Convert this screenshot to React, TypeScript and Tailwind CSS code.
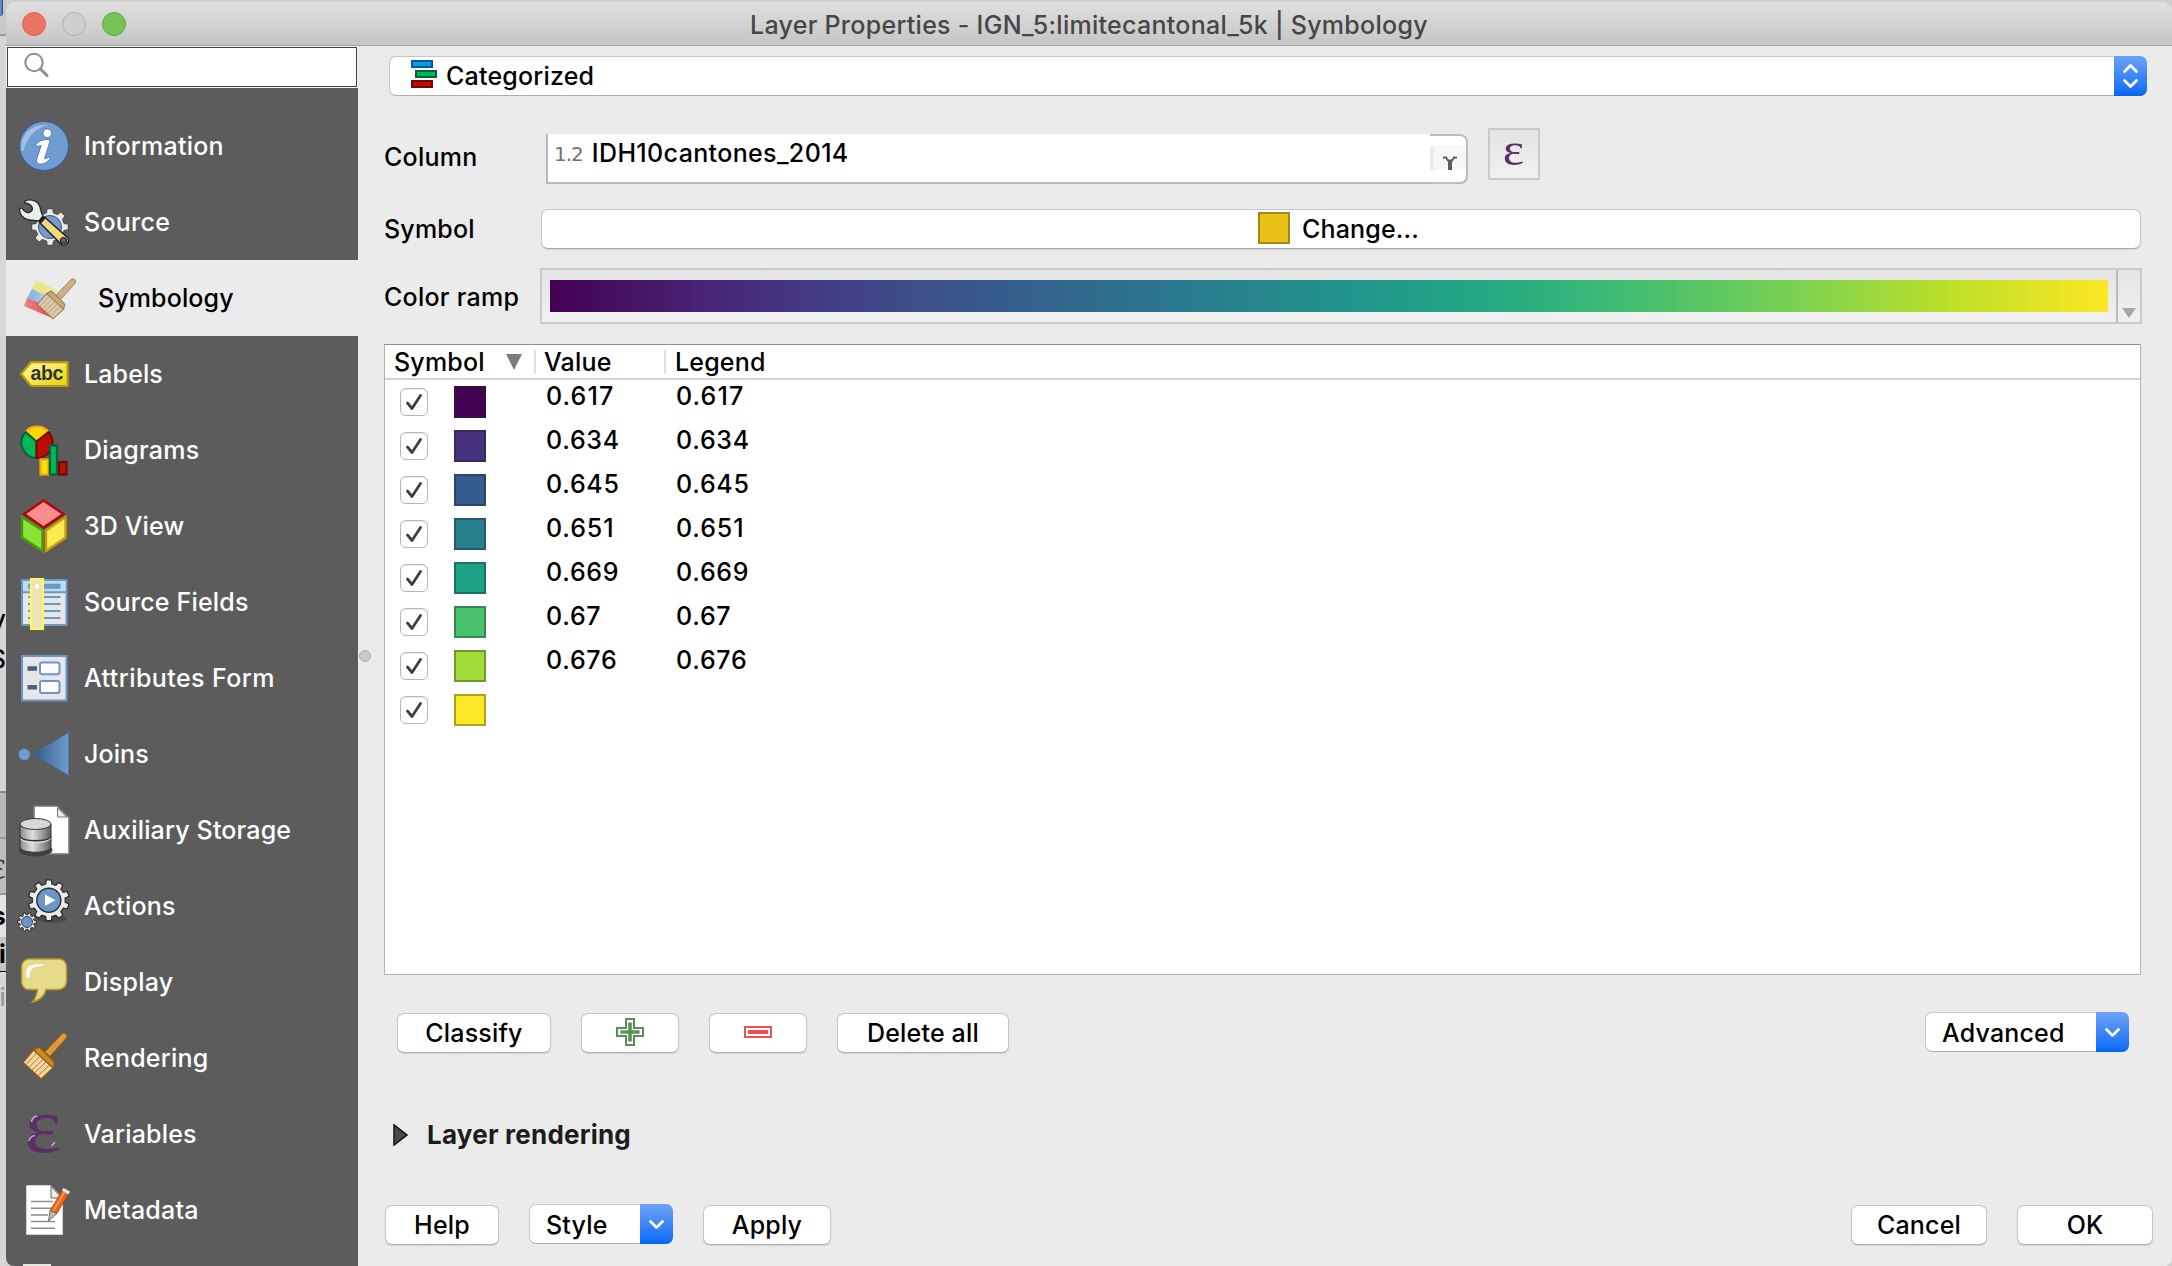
import type { ReactNode } from "react";

function gearPath(cx: number, cy: number, inner: number, outer: number, teeth: number, turn = 0) {
  const step = (Math.PI * 2) / teeth;
  const points: string[] = [];
  for (let i = 0; i < teeth; i++) {
    const a = i * step + turn;
    const corners: [number, number][] = [
      [inner, a - step * 0.3],
      [outer, a - step * 0.2],
      [outer, a + step * 0.2],
      [inner, a + step * 0.3],
    ];
    corners.forEach(([r, t]) => points.push(`${(cx + r * Math.cos(t)).toFixed(2)},${(cy + r * Math.sin(t)).toFixed(2)}`));
  }
  return `M${points.join("L")}Z`;
}

function Icon({ children }: { children: ReactNode }) {
  return (
    <svg viewBox="0 0 60 60" className="h-[60px] w-[60px] shrink-0 overflow-visible">
      {children}
    </svg>
  );
}

function InfoIcon() {
  return (
    <Icon>
      <circle cx="30" cy="30" r="24.5" fill="#6f9dd1" stroke="#415a94" strokeWidth="1.2" />
      <path d="M7.5 35C6 20 15 8 35 8.5C22 12 13 20 9.5 35Z" fill="#a3c0e2" />
      <circle cx="33.3" cy="17.2" r="4.3" fill="#fff" stroke="#4c6ba5" strokeWidth=".8" />
      <path d="M22 28.5C25 25 30 23 34.8 23.5L36 25L30.5 42.5C32.5 43 34 41 35.5 41L36 42.5C34 46 29 48.5 25.5 48C22 47.5 22.5 44 23.3 41L27.2 29.5C25.5 29 24 31 22.5 30.5Z" fill="#fff" stroke="#4c6ba5" strokeWidth=".8" />
    </Icon>
  );
}

function SourceIcon() {
  return (
    <Icon>
      <path d={gearPath(36, 35, 14.5, 18.5, 8, Math.PI / 8 + 0.39)} fill="#e9e9ea" stroke="#333" strokeWidth=".8" />
      <circle cx="36" cy="35" r="11.5" fill="#6f9dd1" stroke="#44546a" strokeWidth="1" />
      <path d="M11 9C17 6 24 9 26 15C27 19 27 21 29 24L25 29C21 28 19 29 15 28C9 27 5 22 5.5 17L8 16C10 20 14 22 17 19.5C20 17 18 12 11 11Z" fill="#eceded" stroke="#2b2b2b" strokeWidth="1.3" />
      <path d="M30.5 25L54 46C56 50 52 54.5 48 53L25.5 30.5Z" fill="#f4d97c" stroke="#222" strokeWidth="1.5" />
      <path d="M30.5 25L25.5 30.5" stroke="#222" strokeWidth="3.5" />
      <circle cx="49.5" cy="48.5" r="3" fill="#666" stroke="#222" strokeWidth="1.2" />
    </Icon>
  );
}

function Brush({ handle, head, bristle, line }: { handle: string; head: string; bristle: string; line: string }) {
  return (
    <g strokeLinejoin="round">
      <path d="M30 24.5L47 6.5C50 4 54.500 7.5 51.5 11L35 29.5Z" fill={handle} stroke={line} strokeWidth="1.1" />
      <path d="M19 22.5L24.5 19.5L30 24.5L35 29.5L40 35L38.5 41L30 34Z" fill={head} stroke={line} strokeWidth="1.2" />
      <path d="M19 22.5L38.5 40.5L26.5 51.5L8.5 35Z" fill={bristle} stroke={line} strokeWidth="1.2" />
      <path d="M11 37.5L22 26M14 40.5L25 29M17 43L28.5 32M20 45.5L31.5 34.5M23 48.5L35 37.5" stroke={line} strokeWidth=".9" strokeOpacity=".8" fill="none" />
    </g>
  );
}

function SymbologyIcon() {
  return (
    <Icon>
      <defs>
        <linearGradient id="fadeY"><stop offset=".3" stopColor="#e9e684" /><stop offset="1" stopColor="#eeeebc" /></linearGradient>
        <linearGradient id="fadeB"><stop offset=".2" stopColor="#90b4e0" /><stop offset="1" stopColor="#d6e2f0" /></linearGradient>
        <linearGradient id="fadeR"><stop offset="0" stopColor="#e9898c" /><stop offset=".6" stopColor="#e2575d" /></linearGradient>
      </defs>
      <path d="M22 12L48 24L42 32L18 21Z" fill="url(#fadeY)" />
      <path d="M18 21L42 32L38 42L13 30Z" fill="url(#fadeB)" />
      <path d="M13 30L42 42L38 50L10 38Z" fill="url(#fadeR)" />
      <g transform="translate(16 6) scale(.87)">
        <Brush handle="#cdb184" head="#c9a972" bristle="#dccbaa" line="#97805a" />
      </g>
    </Icon>
  );
}

function LabelsIcon() {
  return (
    <Icon>
      <defs>
        <linearGradient id="tag" x1="0" y1="0" x2="1" y2="1"><stop offset=".3" stopColor="#fdf07a" /><stop offset="1" stopColor="#e8cf00" /></linearGradient>
      </defs>
      <path d="M7 30L17 18.2H53.7V42H17Z" fill="url(#tag)" stroke="#b8960d" strokeWidth="2.2" />
      <text x="16.5" y="35.8" fontSize="19.5" fontWeight="700" textLength="33" fill="#2e3436" fontFamily="Liberation Sans, sans-serif">abc</text>
    </Icon>
  );
}

function DiagramsIcon() {
  return (
    <Icon>
      <path d="M22.5 21.5L11.5 11.5A15.5 15.5 0 0 1 34.5 11.5Z" fill="#ffd800" stroke="#f6a61c" strokeWidth="2" />
      <path d="M22.5 21.5L11.5 12A15.5 15.5 0 0 0 22.5 38Z" fill="#00b955" stroke="#0b5f3d" strokeWidth="2" />
      <path d="M22.5 21.5L34.5 12A15.5 15.5 0 0 1 22.5 38Z" fill="#bd0b00" stroke="#6e0a05" strokeWidth="2" />
      <rect x="26.5" y="39.5" width="8" height="15" fill="#ffe000" stroke="#f6a61c" strokeWidth="2.2" />
      <rect x="45" y="42" width="7.5" height="12.5" fill="#c20e00" stroke="#6e0a05" strokeWidth="2.2" />
      <rect x="35.8" y="25.5" width="7.2" height="29" fill="#00b955" stroke="#0b5f3d" strokeWidth="2.2" />
    </Icon>
  );
}

function CubeIcon() {
  return (
    <Icon>
      <path d="M29.5 4.5L49.5 18L29.5 31.5L10 18Z" fill="#f78d8d" stroke="#b00606" strokeWidth="2.4" />
      <path d="M8 21L28.5 34.5V55L8 41.5Z" fill="#8ae234" stroke="#4e9a06" strokeWidth="2.4" />
      <path d="M51.5 21L32 34.5V55L51.5 41.5Z" fill="#fce94f" stroke="#c4a000" strokeWidth="2.4" />
    </Icon>
  );
}

function FieldsIcon() {
  return (
    <Icon>
      <rect x="8" y="8" width="44.5" height="45" fill="#e6e6e6" stroke="#6d97c4" strokeWidth="2" />
      <rect x="9" y="9" width="42.5" height="10.5" fill="#bcdcf0" />
      <path d="M8 20.3H52.5" stroke="#6d97c4" strokeWidth="2" />
      <path d="M14 14.3H46.5" stroke="#6d97c4" strokeWidth="5" />
      <path d="M14 25H46.5M14 32H46.5M14 39H46.5M14 46H46.5" stroke="#6d97c4" strokeWidth="2" />
      <rect x="17.2" y="7.2" width="11.6" height="49.6" fill="#ece2ba" stroke="#fcf75e" strokeWidth="2.5" />
      <rect x="21" y="12" width="4" height="4.5" fill="#fff" />
    </Icon>
  );
}

function FormIcon() {
  return (
    <Icon>
      <rect x="8" y="8" width="44.5" height="44.5" fill="#e6e6e6" stroke="#6d97c4" strokeWidth="2" />
      <path d="M13.5 20.5H23M13.5 39.3H23" stroke="#46617d" strokeWidth="4.6" />
      <rect x="26" y="14.5" width="19.5" height="11.8" rx="2" fill="#fbfdff" stroke="#6d97c4" strokeWidth="2" />
      <rect x="26" y="33" width="19.5" height="12" rx="2" fill="#fbfdff" stroke="#6d97c4" strokeWidth="2" />
    </Icon>
  );
}

function JoinsIcon() {
  return (
    <Icon>
      <defs>
        <linearGradient id="join"><stop offset="0" stopColor="#2f5b8a" /><stop offset="1" stopColor="#6f9dcd" /></linearGradient>
      </defs>
      <circle cx="10.3" cy="30.5" r="5.8" fill="#6f9dcd" stroke="#4b79a9" strokeWidth=".8" />
      <path d="M19 30L54.7 8.5V51.5Z" fill="url(#join)" stroke="#44719f" strokeWidth=".8" />
    </Icon>
  );
}

function StorageIcon() {
  return (
    <Icon>
      <defs>
        <linearGradient id="disk"><stop offset="0" stopColor="#8b8b8b" /><stop offset=".4" stopColor="#e0e0e0" /><stop offset="1" stopColor="#5e5e5e" /></linearGradient>
      </defs>
      <path d="M20 6H43L55 17.5V54H20Z" fill="#fff" stroke="#777" strokeWidth="1.5" />
      <path d="M43.5 8V17H53Z" fill="#ececec" stroke="#777" strokeWidth="1" />
      <ellipse cx="21.5" cy="50" rx="17" ry="6.5" fill="#3c4344" />
      <path d="M6 24V47C6 54 37 54 37 47V24Z" fill="url(#disk)" stroke="#333" strokeWidth="1" />
      <path d="M6 36.5C9 42 34 42 37 36.5" fill="none" stroke="#333" strokeWidth="1.5" />
      <path d="M6.5 38.5C9 44 34 44 36.5 38.5" fill="none" stroke="#eee" strokeWidth="1" />
      <ellipse cx="21.500" cy="24" rx="15.5" ry="5.5" fill="#d8d8d8" stroke="#333" strokeWidth="1" />
    </Icon>
  );
}

function ActionsIcon() {
  return (
    <Icon>
      <ellipse cx="38" cy="43" rx="15" ry="4" fill="#4a4a4a" />
      <path d={gearPath(34.8, 24.2, 16.5, 20.5, 10, Math.PI / 10)} fill="#ebebeb" stroke="#2a2a2a" strokeWidth="1.2" />
      <circle cx="34.8" cy="24.2" r="12" fill="#6a96c8" stroke="#22303f" strokeWidth="1.4" />
      <path d="M31 18.5L41.5 24.2L31 30Z" fill="#fff" />
      <path d={gearPath(13, 46, 7.3, 9.5, 10)} fill="#ebebeb" stroke="#2a2a2a" strokeWidth="1" />
      <circle cx="13" cy="46" r="5.5" fill="#6a96c8" stroke="#33475e" strokeWidth="1" />
    </Icon>
  );
}

function DisplayIcon() {
  return (
    <Icon>
      <path d="M15 7H45A7.5 7.5 0 0 1 52.5 14.5V29A8 8 0 0 1 45 37.5H32C31 43 26 48 18.5 50C22 46 23 42 23.5 37.5H15A7.5 7.5 0 0 1 7.7 29V14.5A7.5 7.5 0 0 1 15 7Z" fill="#e5db8b" stroke="#b79a25" strokeWidth="1.5" />
      <path d="M13 26C11 15 14 11.5 30 12.5C30 14 28 14 24 14.5C17 15 16 18 15.5 26Z" fill="#fff" />
    </Icon>
  );
}

function RenderingIcon() {
  return (
    <Icon>
      <g transform="translate(.5 -.5)">
        <Brush handle="#dc9a3e" head="#d08a24" bristle="#f4d5a0" line="#8e5a12" />
      </g>
    </Icon>
  );
}

function VariablesIcon() {
  return (
    <Icon>
      <text x="0" y="48" transform="translate(29 0) scale(1.12 1)" textAnchor="middle" fontSize="79" fill="#5b2f66" fontFamily="Liberation Serif, serif">ε</text>
      <path d="M17.5 18C18 14.5 20 12.5 23.5 12M15 37C15.500 34 18 32 21 31.5M37.5 42L41 38" stroke="#c3a9c9" strokeWidth="1.6" fill="none" />
    </Icon>
  );
}

function MetadataIcon() {
  return (
    <Icon>
      <path d="M12.5 5.5H36.5L48.5 18V54.5H12.5Z" fill="#fff" stroke="#ddd" strokeWidth=".8" />
      <path d="M37 6.5V18H48Z" fill="#eee" stroke="#666" strokeWidth="1" />
      <path d="M17 21.5H39M17 28.2H38M17 35H34M17 41.5H41M17 48.3H41" stroke="#8c8f8d" strokeWidth="1.5" />
      <path d="M36 30.5L48.5 10L54.5 13.5L43 33.5Z" fill="#e8641e" stroke="#b4481c" strokeWidth=".8" />
      <path d="M39 31.5L50.5 12" stroke="#f59a3c" strokeWidth="1.8" />
      <path d="M48 10.5L49.5 8L56 11.5L54.5 14.5Z" fill="#e9e9e9" />
      <path d="M36 30.5L43 33.5L34.5 41Z" fill="#b9b9b9" stroke="#555" strokeWidth=".8" />
    </Icon>
  );
}

const sections: { label: string; tracking: string; icon: ReactNode }[] = [
  { label: "Information", tracking: "tracking-[0.25px]", icon: <InfoIcon /> },
  { label: "Source", tracking: "tracking-[0.25px]", icon: <SourceIcon /> },
  { label: "Symbology", tracking: "tracking-[0.12px]", icon: <SymbologyIcon /> },
  { label: "Labels", tracking: "tracking-[0.12px]", icon: <LabelsIcon /> },
  { label: "Diagrams", tracking: "tracking-[0.25px]", icon: <DiagramsIcon /> },
  { label: "3D View", tracking: "tracking-[0.12px]", icon: <CubeIcon /> },
  { label: "Source Fields", tracking: "tracking-[0.18px]", icon: <FieldsIcon /> },
  { label: "Attributes Form", tracking: "tracking-[0.43px]", icon: <FormIcon /> },
  { label: "Joins", tracking: "tracking-[0.08px]", icon: <JoinsIcon /> },
  { label: "Auxiliary Storage", tracking: "tracking-[0.17px]", icon: <StorageIcon /> },
  { label: "Actions", tracking: "tracking-[0.2px]", icon: <ActionsIcon /> },
  { label: "Display", tracking: "tracking-[0.25px]", icon: <DisplayIcon /> },
  { label: "Rendering", tracking: "tracking-[0.2px]", icon: <RenderingIcon /> },
  { label: "Variables", tracking: "tracking-[0.2px]", icon: <VariablesIcon /> },
  { label: "Metadata", tracking: "tracking-[0.25px]", icon: <MetadataIcon /> },
];

const categories = [
  { value: "0.617", tracking: "tracking-[1.1px]", swatch: "bg-[#440154] border-[#341040]" },
  { value: "0.634", tracking: "tracking-[0.75px]", swatch: "bg-[#46327e] border-[#36295c]" },
  { value: "0.645", tracking: "tracking-[0.75px]", swatch: "bg-[#365c8d] border-[#2b4566]" },
  { value: "0.651", tracking: "tracking-[0.9px]", swatch: "bg-[#277f8e] border-[#235c66]" },
  { value: "0.669", tracking: "tracking-[0.75px]", swatch: "bg-[#1fa187] border-[#1e7261]" },
  { value: "0.67", tracking: "tracking-[0.75px]", swatch: "bg-[#4ac16d] border-[#3a8650]" },
  { value: "0.676", tracking: "tracking-[0.75px]", swatch: "bg-[#a0da39] border-[#72972e]" },
  { value: "", tracking: "", swatch: "bg-[#fde725] border-[#b09f22]" },
];

function Button({ className, children }: { className: string; children: ReactNode }) {
  return (
    <button className={`flex h-10 shrink-0 items-center justify-center rounded-[7px] border border-[#c6c6c6] border-b-[#acacac] bg-white shadow-[0_1px_1px_rgba(0,0,0,0.1)] ${className}`}>
      {children}
    </button>
  );
}

function BlueCap({ double }: { double?: boolean }) {
  return (
    <span className="-my-px -mr-px flex w-[33px] items-center justify-center rounded-r-[7px] bg-linear-to-b from-[#6ea2f5] via-[#3c86f6] to-[#0068f7]">
      <svg viewBox="0 0 33 40" className="h-10 w-[33px]" fill="none" stroke="#fff" strokeWidth="2.8" strokeLinecap="round" strokeLinejoin="round">
        {double ? <path d="M10.5 15.5L16.500 9.5L22.5 15.5M10.5 24.5L16.5 30.5L22.5 24.5" /> : <path d="M10.5 17.5L16.5 23.5L22.5 17.5" />}
      </svg>
    </span>
  );
}

function BackgroundWindow() {
  return (
    <div className="flex w-1.5 shrink-0 flex-col overflow-hidden bg-[#d6d6d6] leading-none text-black">
      <div className="h-9 border-b-2 border-[#999] bg-[#c9c9c9]">
        <div className="h-4 w-[3px] rounded-br-[3px] border-r border-[#2b4f80] bg-[#5b8cc4]" />
      </div>
      <div className="flex h-[600px] items-end justify-end pb-1">y</div>
      <div className="flex h-10 items-end justify-end pb-1">S</div>
      <div className="h-[115px]" />
      <div className="h-[46px] border-t-2 border-[#888] bg-[#b8b8b8]" />
      <div className="flex h-[58px] items-center justify-end border-y-2 border-[#999] bg-[#bdbdbd] font-['Liberation_Serif',serif] text-[40px] text-[#5b2f66]">ε</div>
      <div className="flex h-[42px] items-center justify-end bg-[#e4e4e4] font-bold">s</div>
      <div className="flex h-[35px] items-center justify-end border-b border-black bg-[#c4c4c4] font-bold">i</div>
      <div className="flex h-[50px] items-center justify-end text-[#999]">i</div>
    </div>
  );
}

function Sidebar() {
  return (
    <aside className="flex w-[352px] shrink-0 flex-col overflow-hidden bg-[#5c5c5c]">
      <div className="h-[42px] shrink-0 bg-[#f4f4f4] px-px pt-px">
        <div className="flex h-10 w-[350px] items-center border border-[#3f3f3f] bg-white pl-4">
          <svg viewBox="0 0 26 26" className="-mt-1 h-[26px] w-[26px]" fill="none" stroke="#8c8c8c" strokeLinecap="round">
            <circle cx="10" cy="10.5" r="8.7" strokeWidth="2" />
            <path d="M16.5 17L23 23.5" strokeWidth="3" />
          </svg>
        </div>
      </div>
      <nav className="flex flex-col pt-5 text-white">
        {sections.map((s) =>
          s.label === "Symbology" ? (
            <div key={s.label} className="flex h-[76px] shrink-0 items-center bg-[#ebebeb] pl-2 text-black">
              {s.icon}
              <span className={`ml-6 ${s.tracking}`}>{s.label}</span>
            </div>
          ) : (
            <div key={s.label} className="flex h-[76px] shrink-0 items-center pl-2">
              {s.icon}
              <span className={`ml-2.5 ${s.tracking}`}>{s.label}</span>
            </div>
          ),
        )}
      </nav>
      <div className="mt-4 ml-[17px] h-2 w-7 shrink-0 bg-[#e8e8e0]" />
    </aside>
  );
}

function CategoryTable() {
  return (
    <section className="mt-5 ml-[26px] flex h-[631px] w-[1757px] flex-col border border-[#b4b4b4] border-t-[#8f8f8f] bg-white">
      <div className="flex h-[35px] items-center border-b-2 border-[#d4d4d4]">
        <div className="flex h-6 w-[151px] items-center border-r-2 border-[#e0e0e0] pl-[9px]">
          <span>Symbol</span>
          <svg viewBox="0 0 16 16" className="ml-auto mr-3 h-4 w-4"><path d="M0 0H16L8 16Z" fill="#7c7c7c" /></svg>
        </div>
        <div className="flex h-6 w-[130px] items-center border-r-2 border-[#e0e0e0] pl-2">Value</div>
        <div className="flex h-6 items-center pl-[9px]">Legend</div>
      </div>
      {categories.map((c) => (
        <div key={c.swatch} className="flex h-11 items-center">
          <span className="ml-[15px] flex h-7 w-7 items-center justify-center rounded-[6px] border border-[#b6b6b6] bg-white shadow-[inset_0_1px_1px_rgba(0,0,0,0.08)]">
            <svg viewBox="0 0 28 28" className="h-7 w-7 shrink-0" fill="none" stroke="#404040" strokeWidth="2.8" strokeLinecap="round" strokeLinejoin="round"><path d="M7.5 15L12 20.5L20.5 7.5" /></svg>
          </span>
          <span className={`ml-[26px] h-8 w-8 border-2 ${c.swatch}`} />
          <span className={`mb-3 ml-[60px] w-[130px] ${c.tracking}`}>{c.value}</span>
          <span className={`mb-3 ${c.tracking}`}>{c.value}</span>
        </div>
      ))}
    </section>
  );
}

export default function App() {
  return (
    <div className="flex h-[1266px] w-[2172px] overflow-hidden bg-[#cfcfcf] font-['Inter',sans-serif] text-[25px] leading-8 font-[450] tracking-[0.18px] text-black">
      <BackgroundWindow />
      <div className="mt-0.5 flex h-[1264px] w-[2166px] flex-col overflow-hidden rounded-t-[10px] rounded-b-[8px] bg-[#ebebeb]">
        <header className="flex h-11 shrink-0 items-center border-b border-[#a0a0a0] bg-linear-to-b from-[#e0e0e0] to-[#c5c5c5] pl-4">
          <span className="h-6 w-6 rounded-full border border-[#d9604c] bg-[#ec7462]" />
          <span className="ml-4 h-6 w-6 rounded-full border border-[#b0b0b0] bg-[#cfcfcf]" />
          <span className="ml-4 h-6 w-6 rounded-full border border-[#5aa83e] bg-[#74c455]" />
          <h1 className="ml-[624px] pt-0.5 tracking-[0.28px] whitespace-nowrap text-[#464646]">Layer Properties - IGN_5:limitecantonal_5k | Symbology</h1>
        </header>
        <div className="flex min-h-0 flex-1">
          <Sidebar />
          <div className="flex w-3.5 shrink-0 items-center justify-center">
            <span className="h-3 w-3 rounded-full border border-[#b0b0b0] bg-[#c8c8c8]" />
          </div>
          <main className="-ml-3.5 flex min-w-0 flex-1 flex-col">
            <div className="mt-2.5 ml-[31px] flex h-10 w-[1758px] shrink-0 rounded-[7px] border border-[#c6c6c6] border-b-[#acacac] bg-white">
              <div className="flex flex-1 items-center pl-[21px]">
                <svg viewBox="0 0 28 30" className="-mt-1 h-[30px] w-7">
                  <rect x="1" y="2" width="20" height="6" fill="#00a9b8" stroke="#0b4fc0" strokeWidth="2" />
                  <rect x="5" y="12" width="20" height="6" fill="#00b955" stroke="#0b5f3d" strokeWidth="2" />
                  <rect x="1" y="22" width="20" height="6" fill="#c00c00" stroke="#6e0a05" strokeWidth="2" />
                </svg>
                <span className="ml-[7px] tracking-[0.2px]">Categorized</span>
              </div>
              <BlueCap double />
            </div>

            <div className="mt-8 flex h-[52px] shrink-0 items-center pl-[26px]">
              <span className="w-[162px] pt-1.5 tracking-[0.25px]">Column</span>
              <div className="mt-1.5 flex h-[50px] w-[922px] self-start rounded-r-[8px] border-b-2 border-l-2 border-[#b8b8b8] bg-white">
                <span className="mt-1 ml-1.5 font-['DejaVu_Sans',sans-serif] text-[20px] font-normal tracking-[-1px] text-[#737373]">1.2</span>
                <span className="mt-[3px] ml-[9px] tracking-[0.36px]">IDH10cantones_2014</span>
                <div className="ml-auto h-[50px] w-[38px] rounded-r-[8px] border-t-2 border-r-2 border-b-2 border-[#bcbcbc] pt-2.5">
                  <div className="flex h-6 items-end justify-center border-l-4 border-[#ebebeb] bg-[#f6f6f6]">
                    <svg viewBox="0 0 16 14" className="h-3.5 w-4" fill="none" stroke="#5c5c5c" strokeWidth="2"><path d="M1 1.5H4L6 4.5H10L12 1.5H15" /><path d="M8 5V14" strokeWidth="4" /></svg>
                  </div>
                </div>
              </div>
              <div className="ml-5 flex h-[52px] w-[52px] items-center justify-center border-2 border-[#cacaca] bg-linear-to-b from-[#e4e4e4] to-[#f1f1f1]">
                <svg viewBox="0 0 48 48" className="h-12 w-12"><text x="0" y="35" transform="translate(23.5 0) scale(1.1 1)" textAnchor="middle" fontSize="46" fontWeight="400" fill="#5b2f66" fontFamily="Liberation Serif, serif">ε</text></svg>
              </div>
            </div>

            <div className="mt-[29px] flex h-10 shrink-0 items-center pl-[26px]">
              <span className="w-[157px]">Symbol</span>
              <Button className="w-[1600px] pr-[5px]">
                <span className="-mt-0.5 mr-3 h-8 w-8 border-2 border-[#a08719] bg-[#e8c218]" />
                Change...
              </Button>
            </div>

            <div className="mt-[19px] flex h-14 shrink-0 items-center pl-[26px]">
              <span className="w-[156px] pt-0.5 tracking-[0.25px]">Color ramp</span>
              <div className="flex h-14 w-[1602px] border-2 border-[#cacaca] bg-linear-to-b from-[#e4e4e4] to-[#f1f1f1]">
                <div className="mt-2.5 ml-2 h-8 w-[1558px] bg-[linear-gradient(to_right,#440154_0%,#482475_10%,#414487_20%,#355f8d_30%,#2a788e_40%,#21918c_50%,#22a884_60%,#44bf70_70%,#7ad151_80%,#bddf26_90%,#fde725_100%)]" />
                <div className="ml-2 flex flex-1 items-end justify-center border-l-2 border-[#bababa] pb-1">
                  <svg viewBox="0 0 14 10" className="h-2.5 w-3.5"><path d="M0 0H14L7 10Z" fill="#a6a6a6" /></svg>
                </div>
              </div>
            </div>

            <CategoryTable />

            <div className="mt-[37px] flex h-10 shrink-0 items-center pl-[39px]">
              <Button className="w-[154px] translate-y-px">Classify</Button>
              <Button className="ml-[30px] w-[98px] translate-y-px">
                <svg viewBox="0 0 28 28" className="-mt-0.5 h-7 w-7">
                  <path d="M10 1H18V10H27V18H18V27H10V18H1V10H10Z" fill="#fff" stroke="#5b8f58" strokeWidth="2" />
                  <path d="M14 4.5V23.5M4.5 14H23.5" stroke="#5b8f58" strokeWidth="3.6" />
                </svg>
              </Button>
              <Button className="ml-[30px] w-[98px] translate-y-px">
                <svg viewBox="0 0 28 12" className="-mt-0.5 h-3 w-7">
                  <rect x="1" y="1" width="26" height="10" fill="#fff" stroke="#f05050" strokeWidth="2" />
                  <rect x="4" y="4" width="20" height="4" fill="#f05050" />
                </svg>
              </Button>
              <Button className="ml-[30px] w-[172px] translate-y-px">Delete all</Button>
              <div className="ml-[916px] flex h-10 w-[204px] rounded-[7px] border border-[#c6c6c6] border-b-[#acacac] bg-white">
                <span className="flex flex-1 items-center pt-0.5 pl-4">Advanced</span>
                <BlueCap />
              </div>
            </div>

            <div className="mt-[67px] flex h-8 shrink-0 items-center pl-[35px] text-[#1c1c1c]">
              <svg viewBox="0 0 16 22" className="h-[22px] w-4"><path d="M1 1L14 11L1 21Z" fill="#4a4a4a" stroke="#1c1c1c" strokeWidth="1.6" /></svg>
              <h2 className="ml-[18px] text-[26px] font-bold tracking-[0.22px]">Layer rendering</h2>
            </div>

            <footer className="mt-[53px] flex h-10 shrink-0 items-center pl-[27px]">
              <Button className="w-[114px] translate-y-px">Help</Button>
              <div className="ml-[30px] flex h-10 w-[144px] rounded-[7px] border border-[#c6c6c6] border-b-[#acacac] bg-white">
                <span className="flex flex-1 items-center pt-0.5 pl-4">Style</span>
                <BlueCap />
              </div>
              <Button className="ml-[30px] w-[128px] translate-y-px">Apply</Button>
              <Button className="ml-auto w-[136px] translate-y-px">Cancel</Button>
              <Button className="mr-[19px] ml-[30px] w-[136px] translate-y-px">OK</Button>
            </footer>
          </main>
        </div>
      </div>
    </div>
  );
}
